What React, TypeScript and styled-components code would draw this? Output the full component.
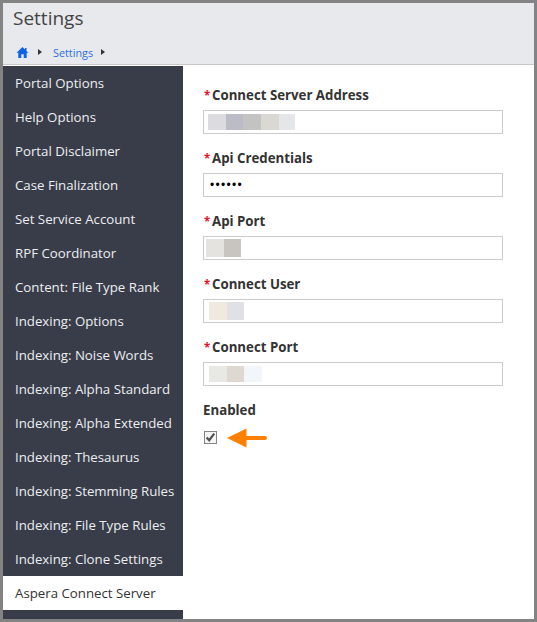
import React from "react";
import styled, { createGlobalStyle } from "styled-components";

const Global = createGlobalStyle`
  html, body { margin: 0; padding: 0; background: #fff; }
  body { font-family: "Open Sans", "Noto Sans", "Liberation Sans", sans-serif; }
  * { box-sizing: border-box; }
`;

const Frame = styled.div`
  width: 537px;
  height: 622px;
  border: 3px solid #838383;
  display: flex;
  flex-direction: column;
  overflow: hidden;
  background: #fff;
`;

const Header = styled.header`
  height: 62px;
  flex: none;
  background: #e8e9ed;
  border-bottom: 1px solid #c8c8c8;
  padding: 3px 10px 0;
  margin-bottom: 1px;
`;

const Title = styled.h1`
  margin: 0;
  font-size: 19px;
  line-height: 24px;
  font-weight: 400;
  color: #444;
`;

const Crumbs = styled.nav`
  display: flex;
  align-items: center;
  margin-top: 14px;
  height: 16px;
  padding-left: 3px;
`;

const Crumb = styled.span`
  font-size: 10.8px;
  color: #2a6fe0;
  margin: 0 8px 0 11px;
`;

const CrumbGap = styled.span`
  width: 9px;
`;

const Body = styled.div`
  flex: 1;
  display: flex;
  min-height: 0;
`;

const Sidebar = styled.ul`
  width: 180px;
  flex: none;
  margin: 0;
  padding: 0;
  list-style: none;
  background: #393d4a;
`;

const Item = styled.li<{ $active?: boolean }>`
  height: 34px;
  display: flex;
  align-items: center;
  padding-left: 12px;
  font-size: 13.25px;
  white-space: nowrap;
  color: ${(p) => (p.$active ? "#333" : "#edeef0")};
  background: ${(p) => (p.$active ? "#fff" : "transparent")};
`;

const Form = styled.main`
  flex: 1;
  padding: 21px 0 0 20px;
`;

const Group = styled.div`
  height: 63px;
`;

const Label = styled.div`
  font-size: 13.25px;
  line-height: 17px;
  height: 17px;
  font-weight: 700;
  color: #333;
  white-space: nowrap;
`;

const Star = styled.span`
  display: inline-block;
  width: 9px;
  padding-left: 1px;
  font-size: 11.5px;
  color: #e8112d;
`;

const Field = styled.div<{ $inset: number }>`
  width: 300px;
  height: 24px;
  margin-top: 6px;
  border: 1px solid #ccc;
  background: #fff;
  display: flex;
  align-items: center;
  padding-left: ${(p) => p.$inset}px;
`;

const Blur = styled.span<{ $w: number; $h: number; $c: string }>`
  width: ${(p) => p.$w}px;
  height: ${(p) => p.$h}px;
  background: ${(p) => p.$c};
  flex: none;
`;

const Dots = styled.span`
  font-family: "Liberation Sans", sans-serif;
  font-size: 12px;
  letter-spacing: 1.3px;
  color: #000;
`;

const CheckRow = styled.div`
  display: flex;
  align-items: center;
  margin-top: 9px;
  gap: 10px;
  height: 20px;
`;

type Block = [number, string];
const fields: { label: string; inset: number; h: number; blocks: Block[] }[] = [
  { label: "Connect Server Address", inset: 4, h: 16, blocks: [[18, "#dcdce0"], [17, "#bcbcc6"], [18, "#c4c3c4"], [18, "#dad8d2"], [16, "#e5e6e8"]] },
  { label: "Api Port", inset: 2, h: 18, blocks: [[18, "#e4e3e0"], [17, "#c8c4c0"]] },
  { label: "Connect User", inset: 5, h: 18, blocks: [[18, "#f0e9e0"], [17, "#e0e1e4"]] },
  { label: "Connect Port", inset: 5, h: 16, blocks: [[18, "#e8e8e4"], [17, "#ded8d2"], [18, "#f2f5fa"]] },
];

const menu = [
  "Portal Options", "Help Options", "Portal Disclaimer", "Case Finalization", "Set Service Account",
  "RPF Coordinator", "Content: File Type Rank", "Indexing: Options", "Indexing: Noise Words",
  "Indexing: Alpha Standard", "Indexing: Alpha Extended", "Indexing: Thesaurus", "Indexing: Stemming Rules",
  "Indexing: File Type Rules", "Indexing: Clone Settings", "Aspera Connect Server",
];

const Caret = () => (
  <svg width="4" height="6" viewBox="0 0 4 6"><path d="M0 0l4 3-4 3z" fill="#333" /></svg>
);

const TextField = ({ f }: { f: (typeof fields)[number] }) => (
  <Group>
    <Label><Star>*</Star>{f.label}</Label>
    <Field $inset={f.inset}>
      {f.blocks.map(([w, c], i) => <Blur key={i} $w={w} $h={f.h} $c={c} />)}
    </Field>
  </Group>
);

export default function App() {
  return (
    <Frame>
      <Global />
      <Header>
        <Title>Settings</Title>
        <Crumbs>
          <svg width="13" height="13" viewBox="0 0 13 13">
            <path d="M6.5 1L0.5 6.8h1.8V12h3V8.2h2.4V12h3V6.8h1.8L10.5 4.9V2H9v1.5z" fill="#0f62e6" />
          </svg>
          <CrumbGap />
          <Caret />
          <Crumb>Settings</Crumb>
          <Caret />
        </Crumbs>
      </Header>
      <Body>
        <Sidebar>
          {menu.map((m) => <Item key={m} $active={m === "Aspera Connect Server"}>{m}</Item>)}
        </Sidebar>
        <Form>
          <TextField f={fields[0]} />
          <Group>
            <Label><Star>*</Star>Api Credentials</Label>
            <Field $inset={6}><Dots>••••••</Dots></Field>
          </Group>
          <TextField f={fields[1]} />
          <TextField f={fields[2]} />
          <TextField f={fields[3]} />
          <Label>Enabled</Label>
          <CheckRow>
            <svg width="14" height="14" viewBox="0 0 14 14">
              <rect x="1.5" y="0.5" width="12" height="12" fill="#f4f4f4" stroke="#858585" />
              <path d="M3.6 6.4l2.6 2.8 5-6.6" fill="none" stroke="#505050" strokeWidth="2.2" />
            </svg>
            <svg width="40" height="20" viewBox="0 0 40 20">
              <path d="M0 10L19.5 0.5V8H38a2 2 0 0 1 0 4H19.5v7.5z" fill="#ff7f00" />
            </svg>
          </CheckRow>
        </Form>
      </Body>
    </Frame>
  );
}
